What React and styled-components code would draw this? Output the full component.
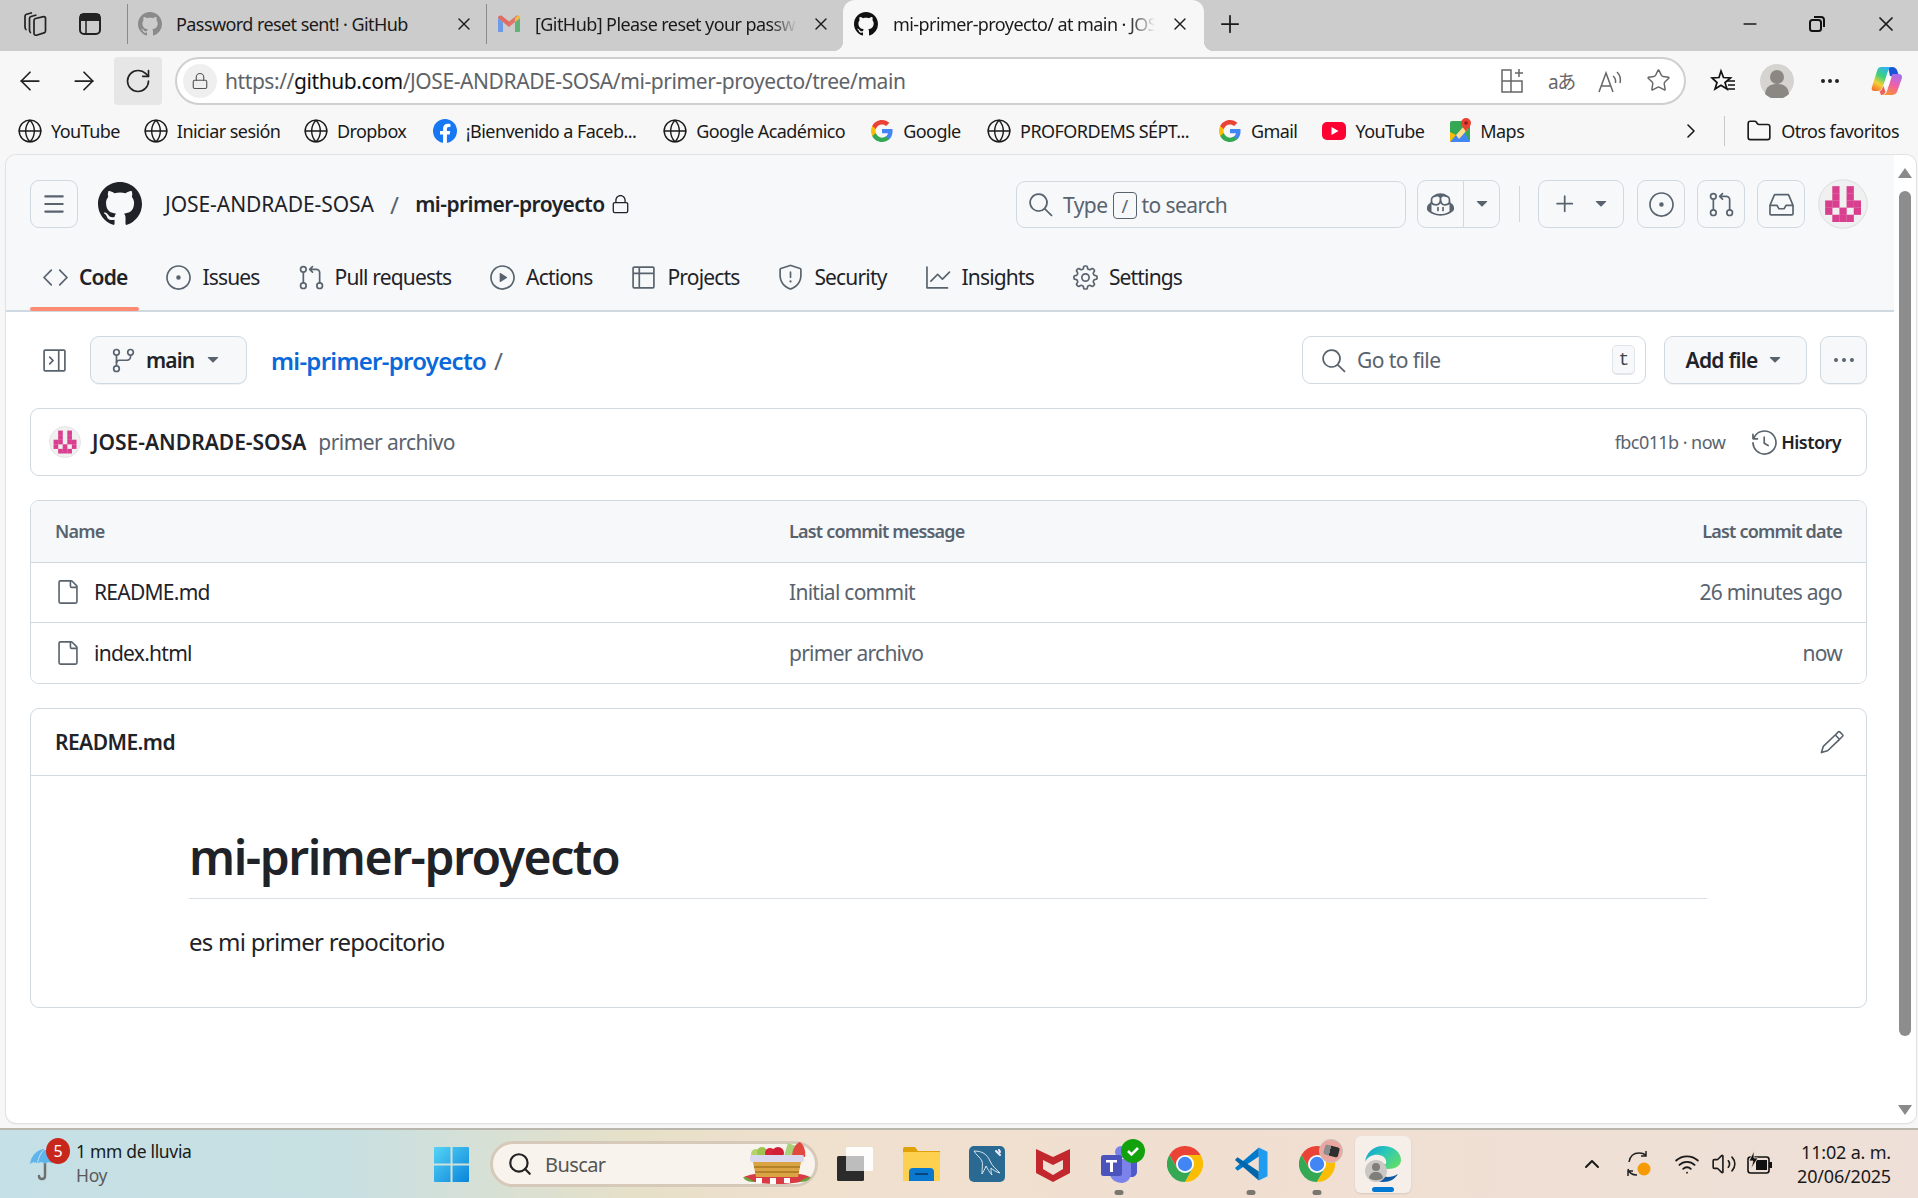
import React from 'react'
import styled, { createGlobalStyle } from 'styled-components'
import {
  GoCode, GoIssueOpened, GoGitPullRequest, GoPlay, GoTable, GoShield, GoGraph, GoGear,
  GoSearch, GoGitBranch, GoFile, GoHistory, GoPencil, GoKebabHorizontal, GoInbox, GoCopilot,
  GoPlus, GoTriangleDown, GoLock, GoSidebarCollapse,
} from 'react-icons/go'
import { BsGithub } from 'react-icons/bs'
import {
  ArrowLeft, ArrowRight, RotateCw, Lock, Star, Globe, Folder, ChevronRight, MoreHorizontal,
  Plus, X, Minus, Wifi, Volume2, ChevronUp, Search, Menu,
} from 'lucide-react'

const FONT = '"Noto Sans", "Open Sans", Arial, sans-serif'

const Global = createGlobalStyle`
  html, body { margin: 0; padding: 0; background: #f7f7f7; }
  * { box-sizing: border-box; }
  body { font-family: ${FONT}; color: #1f2328; }
`

const Screen = styled.div`
  width: 1918px;
  height: 1198px;
  display: flex;
  flex-direction: column;
  overflow: hidden;
  background: #f7f7f7;
  letter-spacing: -0.035em;
`

/* ---------- browser tabs ---------- */
const TabStrip = styled.div`
  height: 51px;
  flex: none;
  background: #cccccc;
  display: flex;
  align-items: flex-start;
  padding-left: 21px;
  color: #1a1a1a;
`
const WinTool = styled.div`
  width: ${p => p.$w || 56}px;
  height: 47px;
  display: flex;
  align-items: center;
  justify-content: ${p => p.$center ? 'center' : 'flex-start'};
  flex: none;
`
const BrowserTab = styled.div`
  position: relative;
  height: ${p => p.$active ? '51px' : '40px'};
  width: ${p => p.$w}px;
  flex: none;
  display: flex;
  align-items: center;
  padding: 0 ${p => p.$active ? 14 : 12}px ${p => p.$active ? 4 : 0}px ${p => p.$active ? 11 : 10}px;
  margin-top: ${p => p.$active ? 0 : 4}px;
  gap: ${p => p.$active ? 15 : 14}px;
  border-left: ${p => p.$sep ? '1px solid #8a8a8a' : 'none'};
  background: ${p => p.$active ? '#f7f7f7' : 'transparent'};
  border-radius: ${p => p.$active ? '12px 12px 0 0' : 0};
  ${p => p.$active ? `
    &::before, &::after {
      content: '';
      position: absolute;
      bottom: 0;
      width: 10px;
      height: 10px;
    }
    &::before { left: -10px; background: radial-gradient(circle at 0 0, transparent 10px, #f7f7f7 10.5px); }
    &::after { right: -10px; background: radial-gradient(circle at 100% 0, transparent 10px, #f7f7f7 10.5px); }
  ` : ''}
`
const TabTitle = styled.span`
  flex: 1;
  min-width: 0;
  font-size: 18px;
  white-space: nowrap;
  overflow: hidden;
  letter-spacing: -0.032em;
  -webkit-mask-image: ${p => p.$fade ? 'linear-gradient(90deg, #000 90%, transparent)' : 'none'};
  mask-image: ${p => p.$fade ? 'linear-gradient(90deg, #000 90%, transparent)' : 'none'};
`
const WindowButtons = styled.div`
  margin-left: auto;
  height: 47px;
  display: flex;
  align-items: center;
  gap: 48px;
  padding-right: 20px;
`

/* ---------- address bar ---------- */
const AddressRow = styled.div`
  height: 59px;
  flex: none;
  display: flex;
  align-items: center;
  padding-left: 15px;
  color: #222;
`
const NavTool = styled.div`
  width: ${p => p.$w}px;
  height: 48px;
  flex: none;
  display: flex;
  align-items: center;
  justify-content: ${p => p.$center ? 'center' : 'flex-start'};
  background: ${p => p.$on ? '#e6e6e6' : 'transparent'};
  border-radius: 4px;
`
const UrlBox = styled.div`
  width: 1511px;
  height: 48px;
  margin-left: 13px;
  flex: none;
  background: #fff;
  border: 2px solid #cfcfcf;
  border-radius: 24px;
  display: flex;
  align-items: center;
  padding: 0 13px 0 6px;
`
const LockChip = styled.div`
  width: 34px;
  height: 34px;
  border-radius: 50%;
  background: #efefef;
  display: flex;
  align-items: center;
  justify-content: center;
  margin-right: 8px;
  color: #555;
`
const Url = styled.span`
  font-size: 21px;
  color: #5f6368;
  letter-spacing: -0.02em;
  white-space: nowrap;
  b { font-weight: 400; color: #111; }
`
const UrlTools = styled.div`
  margin-left: auto;
  display: flex;
  gap: 22px;
  align-items: center;
  color: #666;
`
const TranslateGlyph = styled.span`
  width: 26px;
  font: 19px "Noto Sans", "Noto Sans CJK JP", sans-serif;
  letter-spacing: -0.08em;
  white-space: nowrap;
  color: #666;
`
const RightTools = styled.div`
  display: flex;
  align-items: center;
  margin-left: 24px;
  gap: 24px;
`
const CopilotSlot = styled.div`
  display: flex;
  margin-left: 5px;
`

/* ---------- bookmarks ---------- */
const BookmarksRow = styled.div`
  height: 45px;
  flex: none;
  display: flex;
  align-items: center;
  padding: 0 0 4px 17px;
  font-size: 18px;
  color: #1a1a1a;
`
const Bookmark = styled.div`
  display: flex;
  align-items: center;
  gap: ${p => p.$gap || 9}px;
  margin-right: ${p => p.$mr || 0}px;
  white-space: nowrap;
  flex: none;
`
const BookmarkEnd = styled.div`
  margin-left: auto;
  display: flex;
  align-items: center;
  padding-right: 19px;
  white-space: nowrap;
`
const BookmarkEndLabel = styled.span`
  margin-left: 9px;
`
const Sep = styled.div`
  width: 1px;
  height: 30px;
  background: #c8c8c8;
  margin: 0 21px 0 21px;
`

/* ---------- page ---------- */
const Viewport = styled.div`
  flex: 1;
  min-height: 0;
  margin: 0 2px 5px 6px;
  display: flex;
  background: #fff;
  border-radius: 10px;
  box-shadow: 0 0 0 1px #e2e2e2, 0 1px 2px rgba(0,0,0,0.12);
  overflow: hidden;
`
const Page = styled.div`
  width: 1888px;
  flex: none;
  display: flex;
  flex-direction: column;
`
const Scrollbar = styled.div`
  flex: 1;
  background: #fff;
  display: flex;
  flex-direction: column;
  align-items: center;
  padding: 13px 0 8px;
`
const ScrollArrow = styled.div`
  width: 0;
  height: 0;
  border-left: 7px solid transparent;
  border-right: 7px solid transparent;
  ${p => p.$up ? 'border-bottom: 10px solid #8a8a8a;' : 'border-top: 10px solid #8a8a8a;'}
  flex: none;
`
const ScrollThumb = styled.div`
  width: 12px;
  height: 845px;
  background: #8d8d8d;
  border-radius: 6px;
  margin: 13px 0 auto;
`

const RepoHeader = styled.header`
  background: #f6f8fa;
  height: 157px;
  flex: none;
  border-bottom: 2px solid #d1d9e0;
  display: flex;
  flex-direction: column;
`
const TopRow = styled.div`
  height: 48px;
  margin-top: 25px;
  padding: 0 26px 0 24px;
  display: flex;
  align-items: center;
`
const IconBtn = styled.button`
  width: ${p => p.$w || 48}px;
  height: 48px;
  flex: none;
  padding: 0;
  background: transparent;
  border: 1.5px solid #d1d9e0;
  border-radius: 9px;
  color: #59636e;
  display: flex;
  align-items: center;
  justify-content: center;
  gap: ${p => p.$gap || 0}px;
  margin-left: ${p => p.$ml || 0}px;
`
const Logo = styled(BsGithub)`
  margin-left: 20px;
  flex: none;
  color: #1f2328;
`
const Owner = styled.span`
  font-size: 21px;
  margin-left: 23px;
  letter-spacing: -0.003em;
  white-space: nowrap;
`
const Slash = styled.span`
  font-size: 24px;
  color: #59636e;
  margin: 0 17px 0 16px;
`
const RepoName = styled.span`
  font-size: 21px;
  font-weight: 600;
  white-space: nowrap;
`
const RepoLock = styled(GoLock)`
  margin-left: 5px;
  color: #1f2328;
`
const SearchBox = styled.div`
  width: 390px;
  height: 47px;
  margin-left: auto;
  border: 1.5px solid #d1d9e0;
  border-radius: 9px;
  display: flex;
  align-items: center;
  padding: 1px 0 0 10px;
  color: #59636e;
  font-size: 21px;
  white-space: nowrap;
  svg { margin-right: 9px; }
`
const Kbd = styled.span`
  width: 24px;
  height: 27px;
  border: 1px solid #59636e;
  border-radius: 4px;
  display: inline-flex;
  align-items: center;
  justify-content: center;
  font-size: 18px;
  margin: 2px 5px 0;
`
const SplitBtn = styled.div`
  width: 83px;
  height: 48px;
  margin-left: 11px;
  flex: none;
  border: 1.5px solid #d1d9e0;
  border-radius: 9px;
  display: flex;
  color: #59636e;
`
const SplitPart = styled.div`
  flex: ${p => p.$grow ? 1 : 'none'};
  width: ${p => p.$grow ? 'auto' : '35px'};
  display: flex;
  align-items: center;
  justify-content: center;
  border-right: ${p => p.$grow ? '1.5px solid #d1d9e0' : 'none'};
`
const VDivider = styled.div`
  width: 1px;
  height: 36px;
  background: #d1d9e0;
  margin: 0 18px 0 19px;
  flex: none;
`
const AvatarSlot = styled.div`
  width: 50px;
  height: 50px;
  margin-left: 13px;
  flex: none;
  display: flex;
  align-items: center;
`

const TabsNav = styled.nav`
  height: 71px;
  margin-top: 12px;
  padding: 0 24px;
  display: flex;
  gap: 14px;
  align-items: stretch;
`
const NavTab = styled.a`
  position: relative;
  display: flex;
  align-items: center;
  gap: 10px;
  padding: 4px 12px 0;
  font-size: 21px;
  letter-spacing: -0.04em;
  font-weight: ${p => p.$active ? 600 : 400};
  color: #1f2328;
  white-space: nowrap;
  svg { color: #59636e; }
  &::after {
    content: '';
    display: ${p => p.$active ? 'block' : 'none'};
    position: absolute;
    left: 0;
    right: 0;
    bottom: -1px;
    height: 4px;
    border-radius: 2px;
    background: #fd8c73;
  }
`

const Main = styled.main`
  padding: 24px 27px 24px 24px;
  display: flex;
  flex-direction: column;
`
const Toolbar = styled.div`
  height: 48px;
  display: flex;
  align-items: center;
`
const Ghost = styled.div`
  width: 49px;
  display: flex;
  justify-content: center;
  color: #59636e;
`
const BranchBtn = styled.button`
  width: 157px;
  height: 48px;
  margin-left: 11px;
  padding: 0 0 0 19px;
  background: #f6f8fa;
  border: 1.5px solid #d1d9e0;
  border-radius: 9px;
  box-shadow: 0 1px 0 rgba(31,35,40,0.06);
  display: flex;
  align-items: center;
  gap: 9px;
  font: 600 21px ${FONT};
  letter-spacing: -0.04em;
  color: #1f2328;
  svg { color: #59636e; flex: none; }
`
const Crumb = styled.a`
  margin-left: 24px;
  font-size: 24px;
  font-weight: 600;
  letter-spacing: -0.03em;
  color: #0969da;
  white-space: nowrap;
`
const CrumbSlash = styled.span`
  font-size: 24px;
  color: #59636e;
  margin-left: 8px;
`
const GoToFile = styled.div`
  width: 344px;
  height: 48px;
  margin-left: auto;
  border: 1.5px solid #d1d9e0;
  border-radius: 9px;
  display: flex;
  align-items: center;
  padding: 0 10px 0 17px;
  gap: 10px;
  font-size: 21px;
  color: #59636e;
`
const FileKey = styled.span`
  margin-left: auto;
  width: 23px;
  height: 30px;
  background: #f6f8fa;
  border: 1px solid #e1e5ea;
  border-bottom-width: 2px;
  border-radius: 5px;
  display: flex;
  align-items: center;
  justify-content: center;
  font: 18px "Liberation Mono", monospace;
  color: #3d444d;
`
const ActionBtn = styled.button`
  width: ${p => p.$w}px;
  height: 48px;
  margin-left: ${p => p.$ml}px;
  padding: 0;
  background: #f6f8fa;
  border: 1.5px solid #d1d9e0;
  border-radius: 9px;
  box-shadow: 0 1px 0 rgba(31,35,40,0.06);
  display: flex;
  align-items: center;
  justify-content: center;
  gap: 8px;
  font: 600 21px ${FONT};
  letter-spacing: -0.035em;
  color: #1f2328;
  svg { color: #59636e; }
`
const CommitBox = styled.div`
  height: 68px;
  margin-top: 24px;
  border: 1.5px solid #d1d9e0;
  border-radius: 9px;
  display: flex;
  align-items: center;
  padding: 0 25px 0 18px;
`
const CommitAuthor = styled.span`
  font-size: 21px;
  font-weight: 600;
  letter-spacing: 0;
  margin-left: 11px;
  white-space: nowrap;
`
const CommitMsg = styled.span`
  font-size: 21px;
  color: #59636e;
  margin-left: 12px;
`
const CommitMeta = styled.span`
  margin-left: auto;
  font-size: 18px;
  color: #59636e;
`
const HistoryLink = styled.span`
  margin-left: 26px;
  display: flex;
  align-items: center;
  gap: 3px;
  font-size: 18px;
  font-weight: 600;
  svg { color: #59636e; }
`
const FileTable = styled.div`
  margin-top: 24px;
  border: 1.5px solid #d1d9e0;
  border-radius: 9px;
  overflow: hidden;
`
const FileRow = styled.div`
  height: 60.5px;
  display: grid;
  grid-template-columns: 734px 1fr auto;
  align-items: center;
  padding: 0 24px;
  background: ${p => p.$head ? '#f6f8fa' : '#fff'};
  font-size: ${p => p.$head ? 18 : 21}px;
  font-weight: ${p => p.$head ? 600 : 400};
  letter-spacing: ${p => p.$head ? '-0.045em' : '-0.035em'};
  color: ${p => p.$head ? '#59636e' : '#1f2328'};
  border-top: ${p => p.$first ? 'none' : '1.5px solid #d1d9e0'};
`
const FileName = styled.div`
  display: flex;
  align-items: center;
  gap: 13px;
  svg { color: #59636e; }
`
const Muted = styled.div`
  color: #59636e;
`
const Readme = styled.section`
  margin-top: 24px;
  height: 300px;
  border: 1.5px solid #d1d9e0;
  border-radius: 9px;
  display: flex;
  flex-direction: column;
`
const ReadmeHead = styled.div`
  height: 67px;
  flex: none;
  border-bottom: 1.5px solid #d1d9e0;
  display: flex;
  align-items: center;
  justify-content: space-between;
  padding: 0 21px 0 24px;
  font-size: 21px;
  font-weight: 600;
  svg { color: #59636e; }
`
const ReadmeBody = styled.article`
  padding: 51px 159px 0 158px;
`
const Title = styled.h1`
  margin: 0;
  height: 72px;
  padding-bottom: 12px;
  border-bottom: 1.5px solid #d8dee4;
  font-size: 48px;
  font-weight: 600;
  line-height: 60px;
  letter-spacing: -0.03em;
`
const Para = styled.p`
  margin: 25px 0 0;
  font-size: 24px;
  line-height: 36px;
  letter-spacing: -0.03em;
`

/* ---------- taskbar ---------- */
const Taskbar = styled.div`
  height: 70px;
  flex: none;
  border-top: 2px solid #b9b6ae;
  background: linear-gradient(90deg, #c5e0e6 0%, #c8e0e2 18%, #e6e0c8 33%, #f0e0ce 42%, #f0dfd2 70%, #eee0d8 100%);
  display: flex;
  align-items: center;
  color: #1a1a1a;
  letter-spacing: -0.02em;
`
const Weather = styled.div`
  width: 418px;
  height: 100%;
  flex: none;
  position: relative;
  display: flex;
  align-items: center;
  padding-left: 30px;
  gap: 16px;
`
const WeatherBadge = styled.span`
  position: absolute;
  left: 46px;
  top: 8px;
  width: 24px;
  height: 26px;
  border-radius: 50%;
  background: #c8281c;
  color: #fff;
  font-size: 16px;
  display: flex;
  align-items: center;
  justify-content: center;
`
const WeatherText = styled.div`
  font-size: 17.5px;
  line-height: 24px;
  margin-top: -2px;
  small { display: block; font-size: 17.5px; color: #5a5a5a; }
`
const Slot = styled.div`
  position: relative;
  width: ${p => p.$selected ? 56 : 66}px;
  margin-left: ${p => p.$selected ? 5 : 0}px;
  height: ${p => p.$selected ? 57 : 68}px;
  flex: none;
  display: flex;
  align-items: center;
  justify-content: center;
  background: ${p => p.$selected ? '#f6efe9' : 'transparent'};
  border-radius: 6px;
  box-shadow: ${p => p.$selected ? '0 1px 2px rgba(0,0,0,0.1)' : 'none'};
`
const RunDot = styled.span`
  position: absolute;
  left: 50%;
  bottom: ${p => p.$on ? 1 : 3}px;
  width: ${p => p.$on ? 22 : 9}px;
  height: 5px;
  transform: translateX(-50%);
  border-radius: 3px;
  background: ${p => p.$on ? '#0078d4' : '#7a7670'};
`
const TaskSearch = styled.div`
  width: 328px;
  height: 46px;
  margin: 0 4px 0 6px;
  flex: none;
  background: #f8f3ec;
  border: 3px solid #d6c9ba;
  border-radius: 23px;
  display: flex;
  align-items: center;
  padding-left: 14px;
  gap: 12px;
  font-size: 20px;
  letter-spacing: -0.03em;
  color: #555;
  position: relative;
`
const Basket = styled.span`
  position: absolute;
  right: 3px;
  top: -4px;
`
const Tray = styled.div`
  margin-left: auto;
  display: flex;
  align-items: center;
  padding-right: 27px;
`
const TrayItem = styled.div`
  display: flex;
  align-items: center;
  margin-left: ${p => p.$ml}px;
`
const Clock = styled.div`
  margin-left: 24px;
  text-align: right;
  font-size: 18px;
  line-height: 24px;
  letter-spacing: -0.01em;
  white-space: nowrap;
`

/* ---------- drawings ---------- */
const GoogleG = ({ s = 24 }) => (
  <svg width={s} height={s} viewBox="0 0 24 24">
    <path fill="#4285F4" d="M22.56 12.25c0-.78-.07-1.53-.2-2.25H12v4.26h5.92c-.26 1.37-1.04 2.53-2.21 3.31v2.77h3.57c2.08-1.92 3.28-4.74 3.28-8.09z" />
    <path fill="#34A853" d="M12 23c2.97 0 5.46-.98 7.28-2.66l-3.57-2.77c-.98.66-2.23 1.06-3.71 1.06-2.86 0-5.29-1.93-6.16-4.53H2.18v2.84C3.99 20.53 7.7 23 12 23z" />
    <path fill="#FBBC05" d="M5.84 14.09c-.22-.66-.35-1.36-.35-2.09s.13-1.43.35-2.09V7.07H2.18C1.43 8.55 1 10.22 1 12s.43 3.45 1.18 4.93l2.85-2.22.81-.62z" />
    <path fill="#EA4335" d="M12 5.38c1.62 0 3.06.56 4.21 1.64l3.15-3.15C17.45 2.09 14.97 1 12 1 7.7 1 3.99 3.47 2.18 7.07l3.66 2.84c.87-2.6 3.3-4.53 6.16-4.53z" />
  </svg>
)
const Gmail = () => (
  <svg width="24" height="20" viewBox="0 0 24 20" opacity="0.7">
    <path fill="#4285f4" d="M1 18V4l5 4v10H2a1 1 0 0 1-1-1z" />
    <path fill="#34a853" d="M23 18V4l-5 4v10h4a1 1 0 0 0 1-1z" />
    <path fill="#ea4335" d="M6 8 1 4c0-2 2-3 4-2l7 5.5V13z" />
    <path fill="#ea4335" d="M18 8l5-4c0-2-2-3-4-2l-7 5.5V13z" opacity="0.9" />
    <path fill="#fbbc04" d="M18 8l5-4c0-1.5-1-2.5-2-2.5L18 4z" />
  </svg>
)
const Facebook = () => (
  <svg width="24" height="24" viewBox="0 0 24 24">
    <circle cx="12" cy="12" r="12" fill="#1877f2" />
    <path fill="#fff" d="M16.7 15.5l.5-3.5h-3.3V9.8c0-1 .5-1.9 2-1.9h1.5V5c-.9-.1-1.8-.2-2.7-.2-2.8 0-4.6 1.7-4.6 4.7V12H7v3.5h3.1V24h3.8v-8.5z" />
  </svg>
)
const YouTube = () => (
  <svg width="24" height="18" viewBox="0 0 24 18">
    <rect width="24" height="18" rx="5" fill="#ff0033" />
    <path d="M9.5 5v8l7-4z" fill="#fff" />
  </svg>
)
const Maps = () => (
  <svg width="23" height="26" viewBox="0 0 23 26">
    <rect x="0" y="3" width="20" height="21" rx="2" fill="#34a853" />
    <path d="M0 24 12 10l8 14z" fill="#4285f4" />
    <path d="M0 24V14l6 3z" fill="#fbbc04" />
    <path d="M6 17 15 7l3 4L9 21z" fill="#ffe08a" />
    <path d="M16 0a5 5 0 0 1 5 5c0 3-3 5-5 9-2-4-5-6-5-9a5 5 0 0 1 5-5z" fill="#ea4335" />
    <circle cx="16" cy="5" r="1.8" fill="#8a1f17" />
  </svg>
)
const Copilot = () => (
  <svg width="32" height="32" viewBox="0 0 32 32">
    <defs>
      <linearGradient id="cpL" x1="0.7" y1="0" x2="0.2" y2="1">
        <stop offset="0" stopColor="#2fb4f4" /><stop offset="0.4" stopColor="#3fd07a" />
        <stop offset="0.7" stopColor="#f5d033" /><stop offset="1" stopColor="#f5762e" />
      </linearGradient>
      <linearGradient id="cpR" x1="0.7" y1="0" x2="0.3" y2="1">
        <stop offset="0" stopColor="#a86fee" /><stop offset="0.5" stopColor="#f060a8" />
        <stop offset="1" stopColor="#f6942c" />
      </linearGradient>
    </defs>
    <path fill="#1a55d6" d="M17 2h4c3 0 4.5 1.5 5.5 4.5L28 11h-9z" />
    <path fill="url(#cpL)" d="M10 2h11c-2 0-3 1-4 4l-5 15c-1 3-3 5-6 5H3c-2 0-3-2-2-4L6 6c1-3 2-4 4-4z" />
    <path fill="url(#cpR)" d="M22 9h6c2 0 3.5 2 3 4l-5 14c-1 2-3 3-5 3H10c3 0 5-1 6-4l4-13c.5-2 1-4 2-4z" />
    <path fill="#e9483c" d="M10 30c2 0 3.5-1 4.5-3l-2-6-1 2c-1 2-1.5 3-3 3z" opacity="0.85" />
    <path fill="#fff" d="M17 12h3.5l-3 9H14z" />
  </svg>
)
const Profile = () => (
  <svg width="34" height="34" viewBox="0 0 34 34">
    <circle cx="17" cy="17" r="17" fill="#d6d4d0" />
    <circle cx="17" cy="13" r="7" fill="#8b8883" />
    <path d="M5 30c1-8 6-10 12-10s11 2 12 10a17 17 0 0 1-24 0z" fill="#8b8883" />
  </svg>
)
const Identicon = ({ s }) => {
  const cells = [[1, 0], [3, 0], [1, 1], [3, 1], [0, 2], [1, 2], [3, 2], [4, 2], [0, 3], [2, 3], [4, 3], [1, 4], [2, 4], [3, 4]]
  return (
    <svg width={s} height={s} viewBox="0 0 7 7">
      <circle cx="3.5" cy="3.5" r="3.4" fill="#f0f0f0" stroke="#d3d3d3" strokeWidth="0.1" />
      {cells.map(([x, y]) => <rect key={`${x}-${y}`} x={1 + x} y={1 + y} width="1.02" height="1.02" fill="#d8408f" />)}
    </svg>
  )
}
const Workspaces = () => (
  <svg width="28" height="28" viewBox="0 0 28 28" fill="none" stroke="#222" strokeWidth="1.7">
    <path d="M13 10.5c0-1 .5-1.7 1.5-2l8-1.800c1.200-.2 2 .5 2 1.500V21c0 1-.5 1.600-1.500 1.900l-7.500 2.300c-1.300.3-2.500-.5-2.500-1.700z" />
    <path d="M15.5 5 10 6.500c-1 .3-1.500 1-1.500 2V20c0 1.500.5 2.500 1.500 3" />
    <path d="M11 2.800 5.500 4.300c-1 .3-1.500 1-1.500 2V17c0 1.500.5 2.500 1.500 3" />
  </svg>
)
const TabPane = () => (
  <svg width="24" height="24" viewBox="0 0 24 24" fill="none" stroke="#222" strokeWidth="2">
    <rect x="2" y="2" width="20" height="20" rx="4" />
    <path d="M3 3h18v5H3z" fill="#222" />
    <path d="M8 8v14" strokeWidth="1.5" />
  </svg>
)
const Restore = () => (
  <svg width="18" height="18" viewBox="0 0 18 18" fill="none" stroke="#111" strokeWidth="2">
    <rect x="2" y="5" width="11" height="11" rx="2.5" />
    <path d="M6 2h7a3 3 0 0 1 3 3v7" />
  </svg>
)
const SplitAdd = () => (
  <svg width="26" height="28" viewBox="0 0 26 28" fill="none" stroke="#666" strokeWidth="1.5">
    <path d="M2 3h9v22H2zM11 14H22v11H11zM2 14h9" />
    <path d="M19 2v8M15 6h8" />
  </svg>
)
const ReadAloud = () => (
  <svg width="28" height="28" viewBox="0 0 28 28" fill="none" stroke="#666" strokeWidth="1.5">
    <path d="M3 25 10 6l7 19M5.5 19h9" />
    <path d="M17 9c2 1.5 3 3.5 2.5 7M21 5c3 3 4 7 3 11" />
  </svg>
)
const FavList = () => (
  <svg width="26" height="26" viewBox="0 0 26 26" fill="none" stroke="#111" strokeWidth="1.7">
    <path d="M11 3l2.5 6.5 7 .5-5.5 4.5 2 6.5-6-3.800-6 3.800 2-6.500L2 10l7-.5z" />
    <path d="M17 13h8M18 17h7M17 21h8" />
  </svg>
)
const Windows = () => (
  <svg width="35" height="35" viewBox="0 0 35 35">
    <defs>
      <linearGradient id="winA" x1="0" y1="0" x2="1" y2="1"><stop offset="0" stopColor="#55d4f5" /><stop offset="1" stopColor="#0a84dc" /></linearGradient>
    </defs>
    <path fill="url(#winA)" d="M0 1a1 1 0 0 1 1-1h15.5v16.5H0zM18.5 0H34a1 1 0 0 1 1 1v15.5H18.5zM0 18.5h16.5V35H1a1 1 0 0 1-1-1zM18.5 18.5H35V34a1 1 0 0 1-1 1H18.5z" />
  </svg>
)
const Umbrella = () => (
  <svg width="30" height="34" viewBox="0 0 30 34">
    <path d="M15 14v15c0 4-6 4-6 0" fill="none" stroke="#6f6f6f" strokeWidth="2.5" strokeLinecap="round" />
    <path d="M15 2C7 2 1 9 0 17c3-2.5 6-2.5 7.5 0 2-2.5 5.5-2.5 7.5 0 2-2.5 5.5-2.5 7.5 0 1.5-2.5 4.5-2.5 7.5 0C29 9 23 2 15 2z" fill="#5fb4ec" />
    <path d="M15 2c-4 3-7 9-7.5 15M15 2c4 3 7 9 7.5 15" stroke="#bfe3f8" fill="none" />
  </svg>
)
const FruitBasket = () => (
  <svg width="70" height="44" viewBox="0 0 70 44">
    <path d="M2 37c10-6 56-6 66 0-6 5-16 7-33 7S8 42 2 37z" fill="#d93b45" />
    <path d="M14 38h6v5h-6zM28 38h6v6h-6zM42 38h6v5h-6z" fill="#fff" />
    <path d="M1 37c4 0 8 2 12 5C7 42 3 41 1 37zM69 37c-4 0-8 2-12 5 6 0 10-1 12-5z" fill="#6ba33e" />
    <circle cx="14" cy="14" r="5" fill="#b5d36a" /><circle cx="20" cy="12" r="5" fill="#9ec34f" />
    <circle cx="28" cy="13" r="5" fill="#d9243c" /><circle cx="36" cy="13" r="6" fill="#cf2038" />
    <path d="M42 16 46 3l8 3 4 12z" fill="#a8d17a" />
    <path d="M50 17c0-8 4-14 8-15 4 3 6 9 5 15z" fill="#e3483e" />
    <rect x="8" y="15" width="54" height="7" rx="2" fill="#dad8ee" />
    <path d="M11 22h48l-3 15H14z" fill="#d9a441" />
    <path d="M12 27h46M13 32h44" stroke="#a87420" strokeWidth="1.5" />
  </svg>
)
const TaskView = () => (
  <svg width="36" height="34" viewBox="0 0 36 34">
    <rect x="0" y="9" width="27" height="25" rx="1.5" fill="#2b2b2b" />
    <rect x="9" y="0" width="27" height="24" rx="1.5" fill="#fff" opacity="0.92" />
    <rect x="9" y="9" width="18" height="15" fill="#bdbdbd" />
  </svg>
)
const Explorer = () => (
  <svg width="37" height="34" viewBox="0 0 37 34">
    <path d="M0 2a2 2 0 0 1 2-2h10l3 4h22v6H0z" fill="#e0a106" />
    <rect y="5" width="37" height="29" rx="1" fill="#fdd04f" />
    <path d="M6 34v-9a4 4 0 0 1 4-4h17a4 4 0 0 1 4 4v9z" fill="#0b78d0" />
    <rect x="12" y="26" width="13" height="2" fill="#07457a" />
  </svg>
)
const MySql = () => (
  <svg width="36" height="36" viewBox="0 0 36 36">
    <rect width="36" height="36" rx="5" fill="#2a6a92" />
    <path d="M5 5c8 0 13 3 16 10 2 5 6 8 10 12-4-1-7-3-9-5 0 3 0 5 1 7-3-3-4-6-6-9-1 3-3 6-4 8 0-6 1-10 0-13C11 11 7 9 5 5z" fill="none" stroke="#d8e6ee" strokeWidth="1" />
    <path d="M27 5l4 4M30 4l1 2" stroke="#eef" strokeWidth="2" strokeLinecap="round" />
  </svg>
)
const McAfee = () => (
  <svg width="34" height="36" viewBox="0 0 34 36">
    <path d="M0 3l17 8 17-8v24L17 36 0 27z" fill="#c1272d" />
    <path d="M7 14l10 5 10-5v9l-10 6-10-6z" fill="#f0dfd2" />
  </svg>
)
const Teams = () => (
  <svg width="36" height="40" viewBox="0 0 36 40">
    <circle cx="20" cy="8" r="6" fill="#7b83eb" />
    <circle cx="31" cy="11" r="4" fill="#5059c9" />
    <path d="M26 16h10v12c0 3-3 5-5 5h-5z" fill="#5059c9" />
    <path d="M9 15h21v15a9 9 0 0 1-9 9c-6 0-12-4-12-9z" fill="#7b83eb" />
    <rect x="0" y="11" width="21" height="21" rx="2.5" fill="#4b53bc" />
    <path d="M5 16h11v2.5h-4V28H9v-9.5H5z" fill="#fff" />
  </svg>
)
const TeamsBadge = styled.span`
  position: absolute;
  left: 35px;
  top: 9px;
  width: 24px;
  height: 24px;
  border-radius: 50%;
  background: #13a10e;
  display: flex;
  align-items: center;
  justify-content: center;
`
const Chrome = ({ s = 36 }) => (
  <svg width={s} height={s} viewBox="1 1 22 22">
    <path fill="#ea4335" d="M12 12 12 6.5H21.53A11 11 0 0 0 2.47 6.5L7.24 14.75z" />
    <path fill="#34a853" d="M12 12 7.24 14.75 2.47 6.5A11 11 0 0 0 12 23L16.76 14.75z" />
    <path fill="#fbbc04" d="M12 12 16.76 14.75 12 23A11 11 0 0 0 21.53 6.5H12z" />
    <circle cx="12" cy="12" r="5.5" fill="#fff" />
    <circle cx="12" cy="12" r="4.4" fill="#4285f4" />
  </svg>
)
const ChromeBadge = styled.span`
  position: absolute;
  left: 35px;
  top: 9px;
  width: 24px;
  height: 24px;
  border-radius: 50%;
  background: #eba6a0;
  border: 1px solid #c9c2ba;
  display: flex;
  align-items: center;
  justify-content: center;
  &::before {
    content: '';
    width: 15px;
    height: 10px;
    background: linear-gradient(90deg, #8c8c8c 40%, #2e2e2e 40%);
    border-radius: 2px;
    transform: rotate(15deg);
  }
`
const VsCode = () => (
  <svg width="36" height="36" viewBox="0 0 24 24">
    <path d="M17.2 1 1.3 14.6 3 16.5 17.2 7z" fill="#007acc" />
    <path d="M17.2 23 1.3 9.4 3 7.5 17.2 17z" fill="#0065a9" />
    <path d="M17.2 1 23 3.8V20.2L17.2 23z" fill="#1f9cf0" />
  </svg>
)
const Edge = () => (
  <svg width="36" height="38" viewBox="0 0 36 38">
    <defs>
      <linearGradient id="edA" x1="0" y1="0" x2="1" y2="0.7"><stop offset="0" stopColor="#0c9cd6" /><stop offset="0.5" stopColor="#2cc8b8" /><stop offset="1" stopColor="#5fdc6a" /></linearGradient>
    </defs>
    <path d="M18 1C8 1 1 8 0 17c3-6 9-8 14-7 6 1 8 5 7 9-3 0-5 0-5 2 0 2 3 3 7 3 7 0 13-3 13-9C36 7 28 1 18 1z" fill="url(#edA)" />
    <path d="M4 22c0 8 7 15 14 15 7 0 12-3 15-8-3 2-7 3-10 3-6 0-10-3-11-7z" fill="#0c59a4" />
    <circle cx="11" cy="26" r="11" fill="#c9c8c5" />
    <circle cx="11" cy="22" r="4" fill="#7f7e7b" />
    <path d="M4 33c1-5 4-6 7-6s6 1 7 6c-4 3-10 3-14 0z" fill="#7f7e7b" />
  </svg>
)
const SyncTray = () => (
  <svg width="28" height="30" viewBox="0 0 28 30" fill="none" stroke="#222" strokeWidth="1.5">
    <path d="M4 13C5 7 9 4 14 4c3 0 6 1 7 3M21 2v5h-5" />
    <path d="M3 20c1 4 5 6 9 6M3 27v-5h5" />
    <circle cx="19" cy="20" r="6.5" fill="#f59a00" stroke="none" />
  </svg>
)
const Battery = () => (
  <svg width="26" height="26" viewBox="0 0 26 26">
    <rect x="1" y="6" width="21" height="16" rx="2.5" fill="none" stroke="#111" strokeWidth="1.6" />
    <rect x="9" y="9" width="11" height="10" fill="#111" />
    <rect x="22" y="11" width="3" height="6" fill="#111" />
    <path d="M7 0 2 10h4l-2 8 7-11H7z" fill="#111" stroke="#f0dfd2" strokeWidth="0.8" />
  </svg>
)
const Caret = () => <GoTriangleDown size={20} />

const globe = <Globe size={26} strokeWidth={1.3} />

const bookmarks = [
  { icon: globe, label: 'YouTube', mr: 23, gap: 8 },
  { icon: globe, label: 'Iniciar sesión', mr: 22.5, gap: 8 },
  { icon: globe, label: 'Dropbox', mr: 26.5, gap: 8 },
  { icon: <Facebook />, label: '¡Bienvenido a Faceb...', mr: 26 },
  { icon: globe, label: 'Google Académico', mr: 25, gap: 8 },
  { icon: <GoogleG />, label: 'Google', mr: 25.5 },
  { icon: globe, label: 'PROFORDEMS SÉPT...', mr: 29, gap: 8 },
  { icon: <GoogleG />, label: 'Gmail', mr: 25 },
  { icon: <YouTube />, label: 'YouTube', mr: 26 },
  { icon: <Maps />, label: 'Maps', mr: 0, gap: 7 },
]

const navTabs = [
  { icon: GoCode, label: 'Code', active: true },
  { icon: GoIssueOpened, label: 'Issues' },
  { icon: GoGitPullRequest, label: 'Pull requests' },
  { icon: GoPlay, label: 'Actions' },
  { icon: GoTable, label: 'Projects' },
  { icon: GoShield, label: 'Security' },
  { icon: GoGraph, label: 'Insights' },
  { icon: GoGear, label: 'Settings' },
]

const files = [
  { name: 'README.md', msg: 'Initial commit', date: '26 minutes ago' },
  { name: 'index.html', msg: 'primer archivo', date: 'now' },
]

export default function App() {
  return (
    <Screen>
      <Global />
      <TabStrip>
        <WinTool $w={57}><Workspaces /></WinTool>
        <WinTool $w={49}><TabPane /></WinTool>
        <BrowserTab $w={359} $sep>
          <BsGithub size={24} color="#8a8a8a" />
          <TabTitle>Password reset sent! · GitHub</TabTitle>
          <X size={20} strokeWidth={1.6} />
        </BrowserTab>
        <BrowserTab $w={357} $sep>
          <Gmail />
          <TabTitle $fade>[GitHub] Please reset your passwo</TabTitle>
          <X size={20} strokeWidth={1.6} />
        </BrowserTab>
        <BrowserTab $w={361} $active>
          <BsGithub size={24} color="#111" />
          <TabTitle $fade>mi-primer-proyecto/ at main · JOS</TabTitle>
          <X size={20} strokeWidth={1.6} />
        </BrowserTab>
        <WinTool $w={52} $center><Plus size={28} strokeWidth={1.5} /></WinTool>
        <WindowButtons>
          <Minus size={20} strokeWidth={2} />
          <Restore />
          <X size={24} strokeWidth={1.7} />
        </WindowButtons>
      </TabStrip>

      <AddressRow>
        <NavTool $w={54}><ArrowLeft size={30} strokeWidth={1.4} /></NavTool>
        <NavTool $w={45}><ArrowRight size={30} strokeWidth={1.4} /></NavTool>
        <NavTool $w={48} $center $on><RotateCw size={28} strokeWidth={1.4} /></NavTool>
        <UrlBox>
          <LockChip><Lock size={18} strokeWidth={1.5} /></LockChip>
          <Url>https://<b>github.com</b>/JOSE-ANDRADE-SOSA/mi-primer-proyecto/tree/main</Url>
          <UrlTools>
            <SplitAdd />
            <TranslateGlyph>aあ</TranslateGlyph>
            <ReadAloud />
            <Star size={25} strokeWidth={1.4} />
          </UrlTools>
        </UrlBox>
        <RightTools>
          <FavList />
          <Profile />
          <MoreHorizontal size={24} strokeWidth={2} />
          <CopilotSlot><Copilot /></CopilotSlot>
        </RightTools>
      </AddressRow>

      <BookmarksRow>
        {bookmarks.map(b => (
          <Bookmark key={b.label + b.mr} $mr={b.mr} $gap={b.gap}>{b.icon}{b.label}</Bookmark>
        ))}
        <BookmarkEnd>
          <ChevronRight size={24} strokeWidth={1.6} />
          <Sep />
          <Folder size={26} strokeWidth={1.5} />
          <BookmarkEndLabel>Otros favoritos</BookmarkEndLabel>
        </BookmarkEnd>
      </BookmarksRow>

      <Viewport>
        <Page>
          <RepoHeader>
            <TopRow>
              <IconBtn><Menu size={26} strokeWidth={2} /></IconBtn>
              <Logo size={44} />
              <Owner>JOSE-ANDRADE-SOSA</Owner>
              <Slash>/</Slash>
              <RepoName>mi-primer-proyecto</RepoName>
              <RepoLock size={21} />
              <SearchBox>
                <GoSearch size={27} />
                Type<Kbd>/</Kbd>to search
              </SearchBox>
              <SplitBtn>
                <SplitPart $grow><GoCopilot size={27} /></SplitPart>
                <SplitPart><Caret /></SplitPart>
              </SplitBtn>
              <VDivider />
              <IconBtn $w={86} $gap={12}><GoPlus size={28} /><Caret /></IconBtn>
              <IconBtn $ml={13}><GoIssueOpened size={27} /></IconBtn>
              <IconBtn $ml={12}><GoGitPullRequest size={27} /></IconBtn>
              <IconBtn $ml={12}><GoInbox size={27} /></IconBtn>
              <AvatarSlot><Identicon s={50} /></AvatarSlot>
            </TopRow>
            <TabsNav>
              {navTabs.map(t => (
                <NavTab key={t.label} $active={t.active}><t.icon size={27} />{t.label}</NavTab>
              ))}
            </TabsNav>
          </RepoHeader>

          <Main>
            <Toolbar>
              <Ghost><GoSidebarCollapse size={27} /></Ghost>
              <BranchBtn><GoGitBranch size={27} />main<Caret /></BranchBtn>
              <Crumb>mi-primer-proyecto</Crumb>
              <CrumbSlash>/</CrumbSlash>
              <GoToFile>
                <GoSearch size={27} />Go to file
                <FileKey>t</FileKey>
              </GoToFile>
              <ActionBtn $w={143} $ml={18}>Add file<Caret /></ActionBtn>
              <ActionBtn $w={47} $ml={13}><GoKebabHorizontal size={24} /></ActionBtn>
            </Toolbar>

            <CommitBox>
              <Identicon s={32} />
              <CommitAuthor>JOSE-ANDRADE-SOSA</CommitAuthor>
              <CommitMsg>primer archivo</CommitMsg>
              <CommitMeta>fbc011b · now</CommitMeta>
              <HistoryLink><GoHistory size={27} />History</HistoryLink>
            </CommitBox>

            <FileTable>
              <FileRow $head $first>
                <div>Name</div>
                <div>Last commit message</div>
                <div>Last commit date</div>
              </FileRow>
              {files.map(f => (
                <FileRow key={f.name}>
                  <FileName><GoFile size={26} />{f.name}</FileName>
                  <Muted>{f.msg}</Muted>
                  <Muted>{f.date}</Muted>
                </FileRow>
              ))}
            </FileTable>

            <Readme>
              <ReadmeHead>README.md<GoPencil size={26} /></ReadmeHead>
              <ReadmeBody>
                <Title>mi-primer-proyecto</Title>
                <Para>es mi primer repocitorio</Para>
              </ReadmeBody>
            </Readme>
          </Main>
        </Page>
        <Scrollbar>
          <ScrollArrow $up />
          <ScrollThumb />
          <ScrollArrow />
        </Scrollbar>
      </Viewport>

      <Taskbar>
        <Weather>
          <Umbrella />
          <WeatherBadge>5</WeatherBadge>
          <WeatherText>1 mm de lluvia<small>Hoy</small></WeatherText>
        </Weather>
        <Slot><Windows /></Slot>
        <TaskSearch>
          <Search size={26} strokeWidth={2} color="#222" />
          Buscar
          <Basket><FruitBasket /></Basket>
        </TaskSearch>
        <Slot><TaskView /></Slot>
        <Slot><Explorer /></Slot>
        <Slot><MySql /></Slot>
        <Slot><McAfee /></Slot>
        <Slot>
          <Teams />
          <TeamsBadge>
            <svg width="14" height="14" viewBox="0 0 14 14" fill="none" stroke="#fff" strokeWidth="2.5"><path d="M2 7l3.5 3.5L12 4" /></svg>
          </TeamsBadge>
          <RunDot />
        </Slot>
        <Slot><Chrome /></Slot>
        <Slot><VsCode /><RunDot /></Slot>
        <Slot><Chrome /><ChromeBadge /><RunDot /></Slot>
        <Slot $selected><Edge /><RunDot $on /></Slot>
        <Tray>
          <ChevronUp size={24} strokeWidth={2} />
          <TrayItem $ml={21}><SyncTray /></TrayItem>
          <TrayItem $ml={21}><Wifi size={26} strokeWidth={1.7} /></TrayItem>
          <TrayItem $ml={11}><Volume2 size={26} strokeWidth={1.5} /></TrayItem>
          <TrayItem $ml={10}><Battery /></TrayItem>
          <Clock>11:02 a. m.<br />20/06/2025</Clock>
        </Tray>
      </Taskbar>
    </Screen>
  )
}
